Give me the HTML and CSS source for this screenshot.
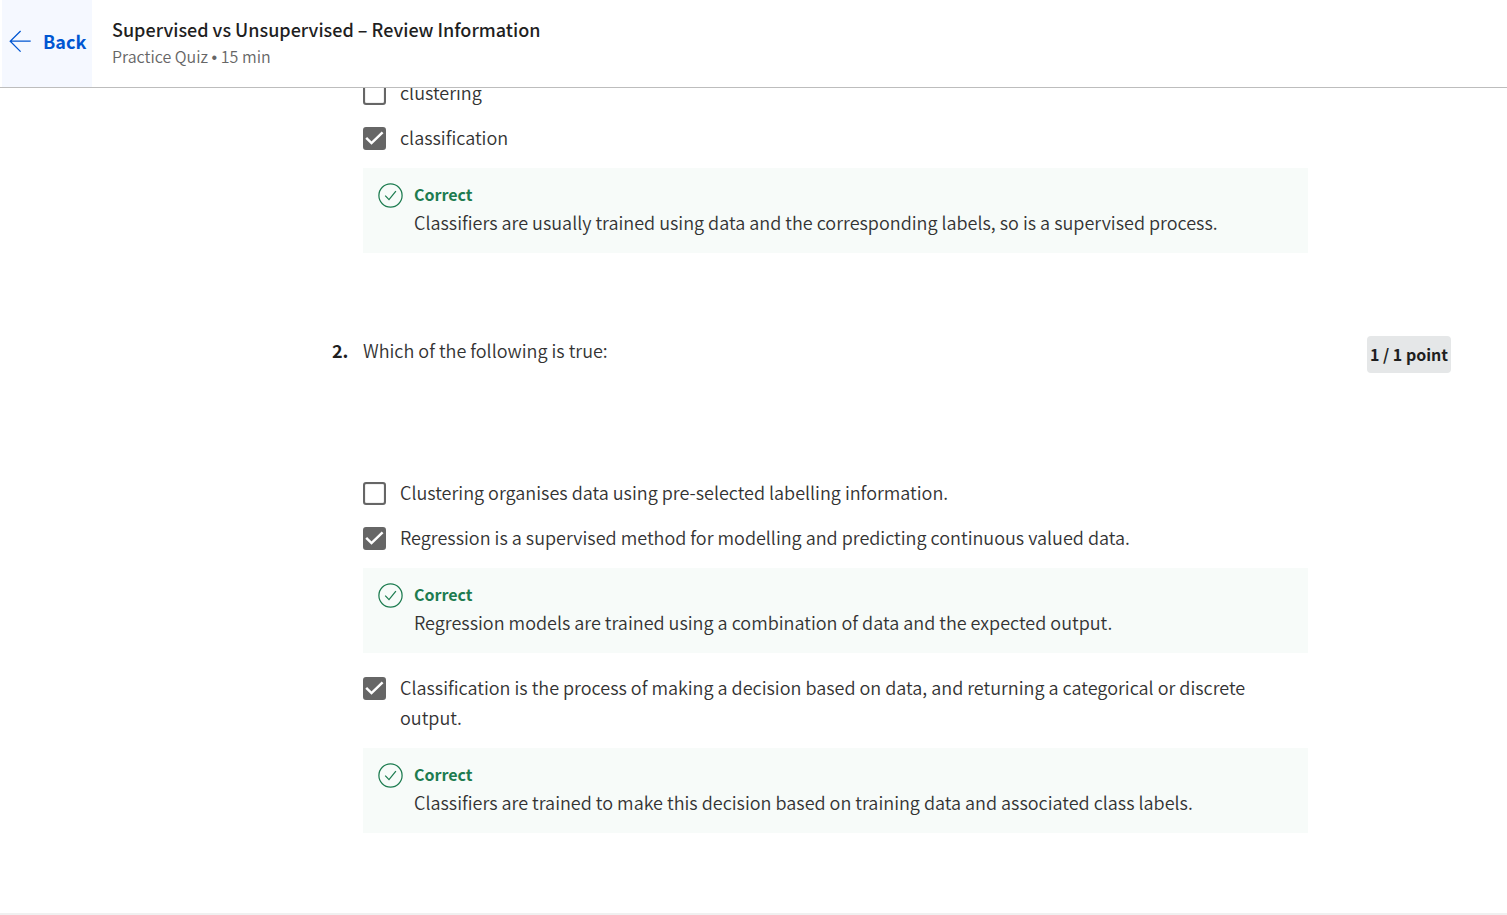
FILE: index.html
```html
<!DOCTYPE html>
<html lang="en">
<head>
<meta charset="utf-8">
<title>Supervised vs Unsupervised – Review Information</title>
<link rel="stylesheet" href="styles.css">
</head>
<body>
<svg class="sprite" aria-hidden="true">
  <symbol id="tick" viewBox="0 0 23 23"><path d="M3.2 10.9 8.5 16.1 19.6 5.3" fill="none" stroke="#fff" stroke-width="2.5"/></symbol>
  <symbol id="correct" viewBox="0 0 25 25"><g fill="none" stroke="#1d7c50" stroke-width="1.25"><circle cx="12.5" cy="12.5" r="11.6"/><path d="M7.2 12.6 11 16.6 17.9 8.2"/></g></symbol>
</svg>
<header class="topbar">
  <a class="back" href="#">
    <svg class="back-icon" viewBox="0 0 22 22" aria-hidden="true"><path d="M11.6 1 1.2 11.2 11.6 21.6M1.2 11.2H21.7" fill="none" stroke="#0056d2" stroke-width="1.25"/></svg>
    <span>Back</span>
  </a>
  <div class="heading">
    <h1 class="title">Supervised vs Unsupervised – Review Information</h1>
    <p class="subtitle">Practice Quiz <span class="dot">•</span> 15 min</p>
  </div>
</header>
<main class="quiz">
  <section class="question">
    <div class="content options">
      <label class="option"><span class="check"><input type="checkbox" class="box"></span><span>clustering</span></label>
      <label class="option"><span class="check"><input type="checkbox" class="box" checked><svg class="tick"><use href="#tick"/></svg></span><span>classification</span></label>
      <div class="feedback">
        <svg class="feedback-icon" aria-hidden="true"><use href="#correct"/></svg>
        <div><strong class="verdict">Correct</strong><p class="reason">Classifiers are usually trained using data and the corresponding labels, so is a supervised process.</p></div>
      </div>
    </div>
  </section>
  <section class="question">
    <span class="number">2.</span>
    <div class="content">
      <p class="prompt">Which of the following is true:</p>
      <div class="options">
        <label class="option"><span class="check"><input type="checkbox" class="box"></span><span>Clustering organises data using pre-selected labelling information.</span></label>
        <label class="option"><span class="check"><input type="checkbox" class="box" checked><svg class="tick"><use href="#tick"/></svg></span><span>Regression is a supervised method for modelling and predicting continuous valued data.</span></label>
        <div class="feedback">
          <svg class="feedback-icon" aria-hidden="true"><use href="#correct"/></svg>
          <div><strong class="verdict">Correct</strong><p class="reason">Regression models are trained using a combination of data and the expected output.</p></div>
        </div>
        <label class="option"><span class="check"><input type="checkbox" class="box" checked><svg class="tick"><use href="#tick"/></svg></span><span>Classification is the process of making a decision based on data, and returning a categorical or discrete output.</span></label>
        <div class="feedback">
          <svg class="feedback-icon" aria-hidden="true"><use href="#correct"/></svg>
          <div><strong class="verdict">Correct</strong><p class="reason">Classifiers are trained to make this decision based on training data and associated class labels.</p></div>
        </div>
      </div>
    </div>
    <span class="points">1 / 1 point</span>
  </section>
</main>
</body>
</html>
```
FILE: styles.css
```css
* { box-sizing: border-box; }
body {
  margin: 0;
  background: #fff;
  color: #1f1f1f;
  font: 350 18px/30px "Noto Sans CJK SC", "Noto Sans", sans-serif;
}
h1, p { margin: 0; }
.sprite { display: none; }

.topbar {
  position: sticky;
  top: 0;
  z-index: 1;
  display: flex;
  height: 88px;
  padding-left: 2px;
  background: #fff;
  border-bottom: 1px solid #bdbdbd;
}
.back {
  display: flex;
  align-items: center;
  gap: 12px;
  width: 90px;
  padding: 0 0 5px 7px;
  background: #f5f8ff;
  color: #0056d2;
  font-weight: 700;
  text-decoration: none;
}
.back-icon { width: 22px; height: 22px; flex: none; }
.heading { padding: 15px 20px; }
.title { font-size: 18px; line-height: 28px; font-weight: 500; }
.subtitle { font-size: 16px; line-height: 26px; color: #666; }
.dot { font-family: "Liberation Sans", sans-serif; }

/* The list continues underneath the sticky bar. */
.quiz {
  display: flex;
  flex-direction: column;
  gap: 82px;
  margin-top: -11px;
  padding-bottom: 80px;
  border-bottom: 2px solid #f0f0f0;
}
.question {
  display: grid;
  grid-template-columns: 31px 1fr 84px;
  align-items: start;
  padding: 0 56px 0 332px;
}
.content { grid-column: 2; margin-right: 59px; }
.number { font-weight: 700; }
.prompt { margin-bottom: 112px; color: #333; }
.points {
  margin-top: 1px;
  padding: 4px 0;
  border-radius: 4px;
  background: #e5e7e8;
  font-size: 16px;
  line-height: 29px;
  font-weight: 700;
  text-align: center;
}

.options { display: flex; flex-direction: column; gap: 15px; color: #333; }
.option { display: flex; gap: 14px; }
.check { display: grid; flex: none; height: 32px; margin-bottom: -2px; align-items: center; }
.check > * { grid-area: 1 / 1; width: 23px; height: 23px; }
.box {
  appearance: none;
  margin: 0;
  border: 2px solid #666;
  border-radius: 3px;
  box-shadow: inset 0 0 1px #666;
}
.box:checked { background: #666; }
.tick { pointer-events: none; }

.feedback {
  display: flex;
  gap: 11px;
  margin-top: 1px;
  padding: 13px 15px 16px;
  background: #f7fbf9;
}
.feedback + .option { margin-top: 4px; }
.feedback-icon { width: 25px; height: 25px; flex: none; margin-top: 2px; }
.verdict { display: block; font-size: 16px; line-height: 26px; font-weight: 700; color: #1d7c50; }
```
